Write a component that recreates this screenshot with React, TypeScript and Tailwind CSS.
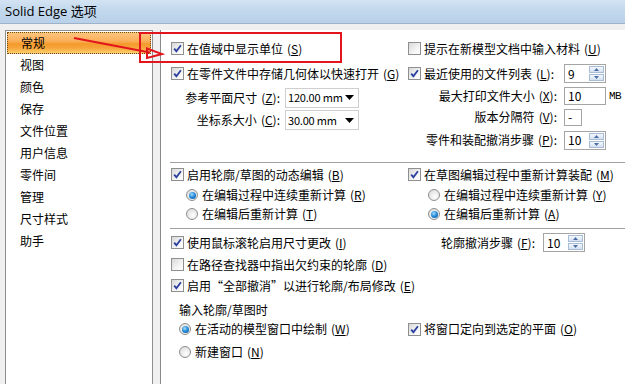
import React from 'react';

const FONT = "font-['Noto_Sans_CJK_SC','Noto_Sans',sans-serif]";

/* mnemonic suffix like (S) with underlined letter */
function Key({ k, colon }: { k: string; colon?: boolean }) {
  return (
    <span className="ml-[4px]">
      (<span className="underline underline-offset-1">{k}</span>){colon && ':'}
    </span>
  );
}

function CheckBox({ checked }: { checked?: boolean }) {
  return (
    <span className="inline-flex h-[13px] w-[13px] shrink-0 items-center justify-center border border-[#8e8f8f] bg-[linear-gradient(135deg,#d8d8d8,#f4f4f4_60%,#ffffff)]">
      {checked && (
        <svg width="9" height="9" viewBox="0 0 9 9">
          <path d="M1.2 4.6 L3.4 7.2 L7.9 1.2" fill="none" stroke="#2b3f9e" strokeWidth="1.8" />
        </svg>
      )}
    </span>
  );
}

function Radio({ checked }: { checked?: boolean }) {
  return (
    <span className="inline-flex h-[12px] w-[12px] shrink-0 items-center justify-center rounded-full border border-[#8e8f8f] bg-[radial-gradient(circle_at_60%_65%,#ffffff,#d6d6d6)]">
      {checked && (
        <span className="h-[7px] w-[7px] rounded-full bg-[radial-gradient(circle_at_40%_35%,#9ddcff,#1a7ed0_55%,#0a4f98)]" />
      )}
    </span>
  );
}

function CheckRow({ text, k, checked, h }: { text: React.ReactNode; k: string; checked?: boolean; h: string }) {
  return (
    <div className={`flex items-center gap-[3px] ${h}`}>
      <CheckBox checked={checked} />
      <span className="whitespace-nowrap">
        {text}
        <Key k={k} />
      </span>
    </div>
  );
}

function RadioRow({ text, k, checked, h, pad }: { text: string; k: string; checked?: boolean; h: string; pad: string }) {
  return (
    <div className={`flex items-center gap-[4px] ${h} ${pad}`}>
      <Radio checked={checked} />
      <span className="whitespace-nowrap">
        {text}
        <Key k={k} />
      </span>
    </div>
  );
}

function SpinBtn({ up }: { up?: boolean }) {
  return (
    <span className="flex h-[7px] w-[15px] items-center justify-center border border-[#a9bcd6] bg-[linear-gradient(to_bottom,#f4f8fd,#d3e0f1)]">
      <svg width="5" height="3" viewBox="0 0 5 3">
        <path d={up ? 'M0 3 L2.5 0 L5 3 Z' : 'M0 0 L5 0 L2.5 3 Z'} fill="#4c6ea6" />
      </svg>
    </span>
  );
}

function Spinner({ value }: { value: string }) {
  return (
    <div className="flex h-[19px] w-[42px] items-center justify-between border border-[#a5a5a5] bg-white pl-[3px] pr-[1px]">
      <span>{value}</span>
      <div className="flex flex-col gap-[1px]">
        <SpinBtn up />
        <SpinBtn />
      </div>
    </div>
  );
}

function Dropdown({ value }: { value: string }) {
  return (
    <div className="ml-[5px] flex h-[20px] w-[74px] items-center justify-between border border-[#cfcfcf] bg-white pl-[2px] pr-[4px]">
      <span className="whitespace-nowrap text-[11px] tracking-[-0.2px]">{value}</span>
      <svg width="9" height="5" viewBox="0 0 9 5" className="shrink-0">
        <path d="M0 0 L9 0 L4.5 5 Z" fill="#000" />
      </svg>
    </div>
  );
}

function Separator({ mt }: { mt: string }) {
  return <div className={`ml-[9px] h-[2px] border-t border-b border-t-[#a0a0a0] border-b-white ${mt}`} />;
}

const navItems = ['常规', '视图', '颜色', '保存', '文件位置', '用户信息', '零件间', '管理', '尺寸样式', '助手'];

export default function App() {
  return (
    <div lang="zh-CN" className={`relative h-[384px] w-[625px] overflow-hidden bg-[#f0f0f0] text-[12px] leading-none text-black ${FONT}`}>
      {/* title bar */}
      <div className="flex h-[24px] items-center border-b border-[#9fb3c8] bg-[linear-gradient(to_bottom,#d3e3f3,#c1d7ec_50%,#b8d0e9)] pl-[5px] text-[13px] font-['Open_Sans','Noto_Sans_CJK_SC',sans-serif]">
        Solid Edge 选项
      </div>

      <div className="flex pt-[6px]">
        {/* category list */}
        <div className="ml-[5px] h-[360px] w-[148px] border border-[#8e8f8f] bg-white pt-[1px]">
          {navItems.map((item, i) => (
            <div
              key={item}
              className={
                i === 0
                  ? 'mx-[1px] flex h-[22px] items-center border border-dotted border-[#6b4a1e] bg-[linear-gradient(to_bottom,#fcc47e,#fbb05a_40%,#f49a2c_55%,#f7a53c_75%,#fdd06a)] pl-[13px]'
                  : 'flex h-[22px] items-center pl-[14px]'
              }
            >
              {item}
            </div>
          ))}
        </div>

        {/* settings page */}
        <div className="ml-[7px] h-[360px] flex-1 border-l border-[#8a8a8a] bg-white">
          {/* section A */}
          <div className="flex pt-[6px]">
            <div className="w-[247px] pl-[10px]">
              <CheckRow text="在值域中显示单位" k="S" checked h="h-[25px]" />
              <CheckRow text="在零件文件中存储几何体以快速打开" k="G" checked h="h-[25px]" />
              <div className="flex h-[23px] items-center">
                <span className="w-[109px] whitespace-nowrap text-right">
                  参考平面尺寸<Key k="Z" colon />
                </span>
                <Dropdown value="120.00 mm" />
              </div>
              <div className="flex h-[22px] items-center">
                <span className="w-[109px] whitespace-nowrap text-right">
                  坐标系大小<Key k="C" colon />
                </span>
                <Dropdown value="30.00 mm" />
              </div>
            </div>
            <div className="flex-1">
              <CheckRow text="提示在新模型文档中输入材料" k="U" h="h-[25px]" />
              <div className="flex h-[25px] items-center">
                <div className="flex flex-1 items-center gap-[3px]">
                  <CheckBox checked />
                  <span className="whitespace-nowrap">
                    最近使用的文件列表<Key k="L" colon />
                  </span>
                </div>
                <Spinner value="9" />
                <span className="w-[19px]" />
              </div>
              <div className="flex h-[20px] items-center">
                <span className="flex-1 whitespace-nowrap pr-[7px] text-right">
                  最大打印文件大小<Key k="X" colon />
                </span>
                <div className="flex h-[18px] w-[42px] items-center border border-[#a5a5a5] bg-white pl-[3px]">10</div>
                <span className="w-[19px] whitespace-nowrap pl-[3px] font-['Liberation_Mono',monospace] text-[11px] tracking-[-0.5px]">MB</span>
              </div>
              <div className="flex h-[22px] items-center">
                <span className="flex-1 whitespace-nowrap pr-[7px] text-right">
                  版本分隔符<Key k="V" colon />
                </span>
                <div className="w-[42px]">
                  <div className="flex h-[17px] w-[18px] items-center border border-[#a5a5a5] bg-white pl-[3px]">-</div>
                </div>
                <span className="w-[19px]" />
              </div>
              <div className="flex h-[24px] items-center">
                <span className="flex-1 whitespace-nowrap pr-[7px] text-right">
                  零件和装配撤消步骤<Key k="P" colon />
                </span>
                <Spinner value="10" />
                <span className="w-[19px]" />
              </div>
            </div>
          </div>

          <Separator mt="mt-[10px]" />

          {/* section B */}
          <div className="flex">
            <div className="w-[247px] pl-[10px]">
              <CheckRow text="启用轮廓/草图的动态编辑" k="B" checked h="h-[21px]" />
              <RadioRow text="在编辑过程中连续重新计算" k="R" checked h="h-[20px]" pad="pl-[15px]" />
              <RadioRow text="在编辑后重新计算" k="T" h="h-[18px]" pad="pl-[15px]" />
            </div>
            <div className="flex-1">
              <CheckRow text="在草图编辑过程中重新计算装配" k="M" checked h="h-[21px]" />
              <RadioRow text="在编辑过程中连续重新计算" k="Y" h="h-[20px]" pad="pl-[20px]" />
              <RadioRow text="在编辑后重新计算" k="A" checked h="h-[18px]" pad="pl-[20px]" />
            </div>
          </div>

          <Separator mt="mt-[5px]" />

          {/* section C */}
          <div className="pt-[1px]">
            <div className="flex h-[23px] items-center">
              <div className="w-[247px] pl-[10px]">
                <CheckRow text="使用鼠标滚轮启用尺寸更改" k="I" checked h="h-[23px]" />
              </div>
              <span className="w-[127px] whitespace-nowrap text-right">
                轮廓撤消步骤<Key k="F" colon />
              </span>
              <div className="ml-[8px]">
                <Spinner value="10" />
              </div>
            </div>
            <div className="pl-[10px]">
              <CheckRow text="在路径查找器中指出欠约束的轮廓" k="D" h="h-[21px]" />
              <CheckRow
                text={
                  <>
                    启用<span className="inline-block w-[12px] text-right">“</span>全部撤消
                    <span className="inline-block w-[12px] text-left">”</span>以进行轮廓/布局修改
                  </>
                }
                k="E"
                checked
                h="h-[21px]"
              />
            </div>
            <div className="mt-[5px] flex h-[18px] items-center pl-[18px]">输入轮廓/草图时</div>
            <div className="flex h-[20px] items-center">
              <div className="w-[247px]">
                <RadioRow text="在活动的模型窗口中绘制" k="W" checked h="h-[20px]" pad="pl-[18px]" />
              </div>
              <CheckRow text="将窗口定向到选定的平面" k="O" checked h="h-[20px]" />
            </div>
            <div className="mt-[3px]">
              <RadioRow text="新建窗口" k="N" h="h-[20px]" pad="pl-[18px]" />
            </div>
          </div>
        </div>
      </div>

      {/* red annotation overlay */}
      <div className="absolute left-[139px] top-[32px] h-[31px] w-[203px] border-2 border-[#e3151c]" />
      <svg className="absolute left-0 top-0" width="200" height="70" viewBox="0 0 200 70">
        <line x1="74" y1="38" x2="150" y2="52.5" stroke="#e3151c" strokeWidth="2" />
        <polygon points="147,48.5 162,54 147,58" fill="none" stroke="#e3151c" strokeWidth="2" />
      </svg>
    </div>
  );
}
